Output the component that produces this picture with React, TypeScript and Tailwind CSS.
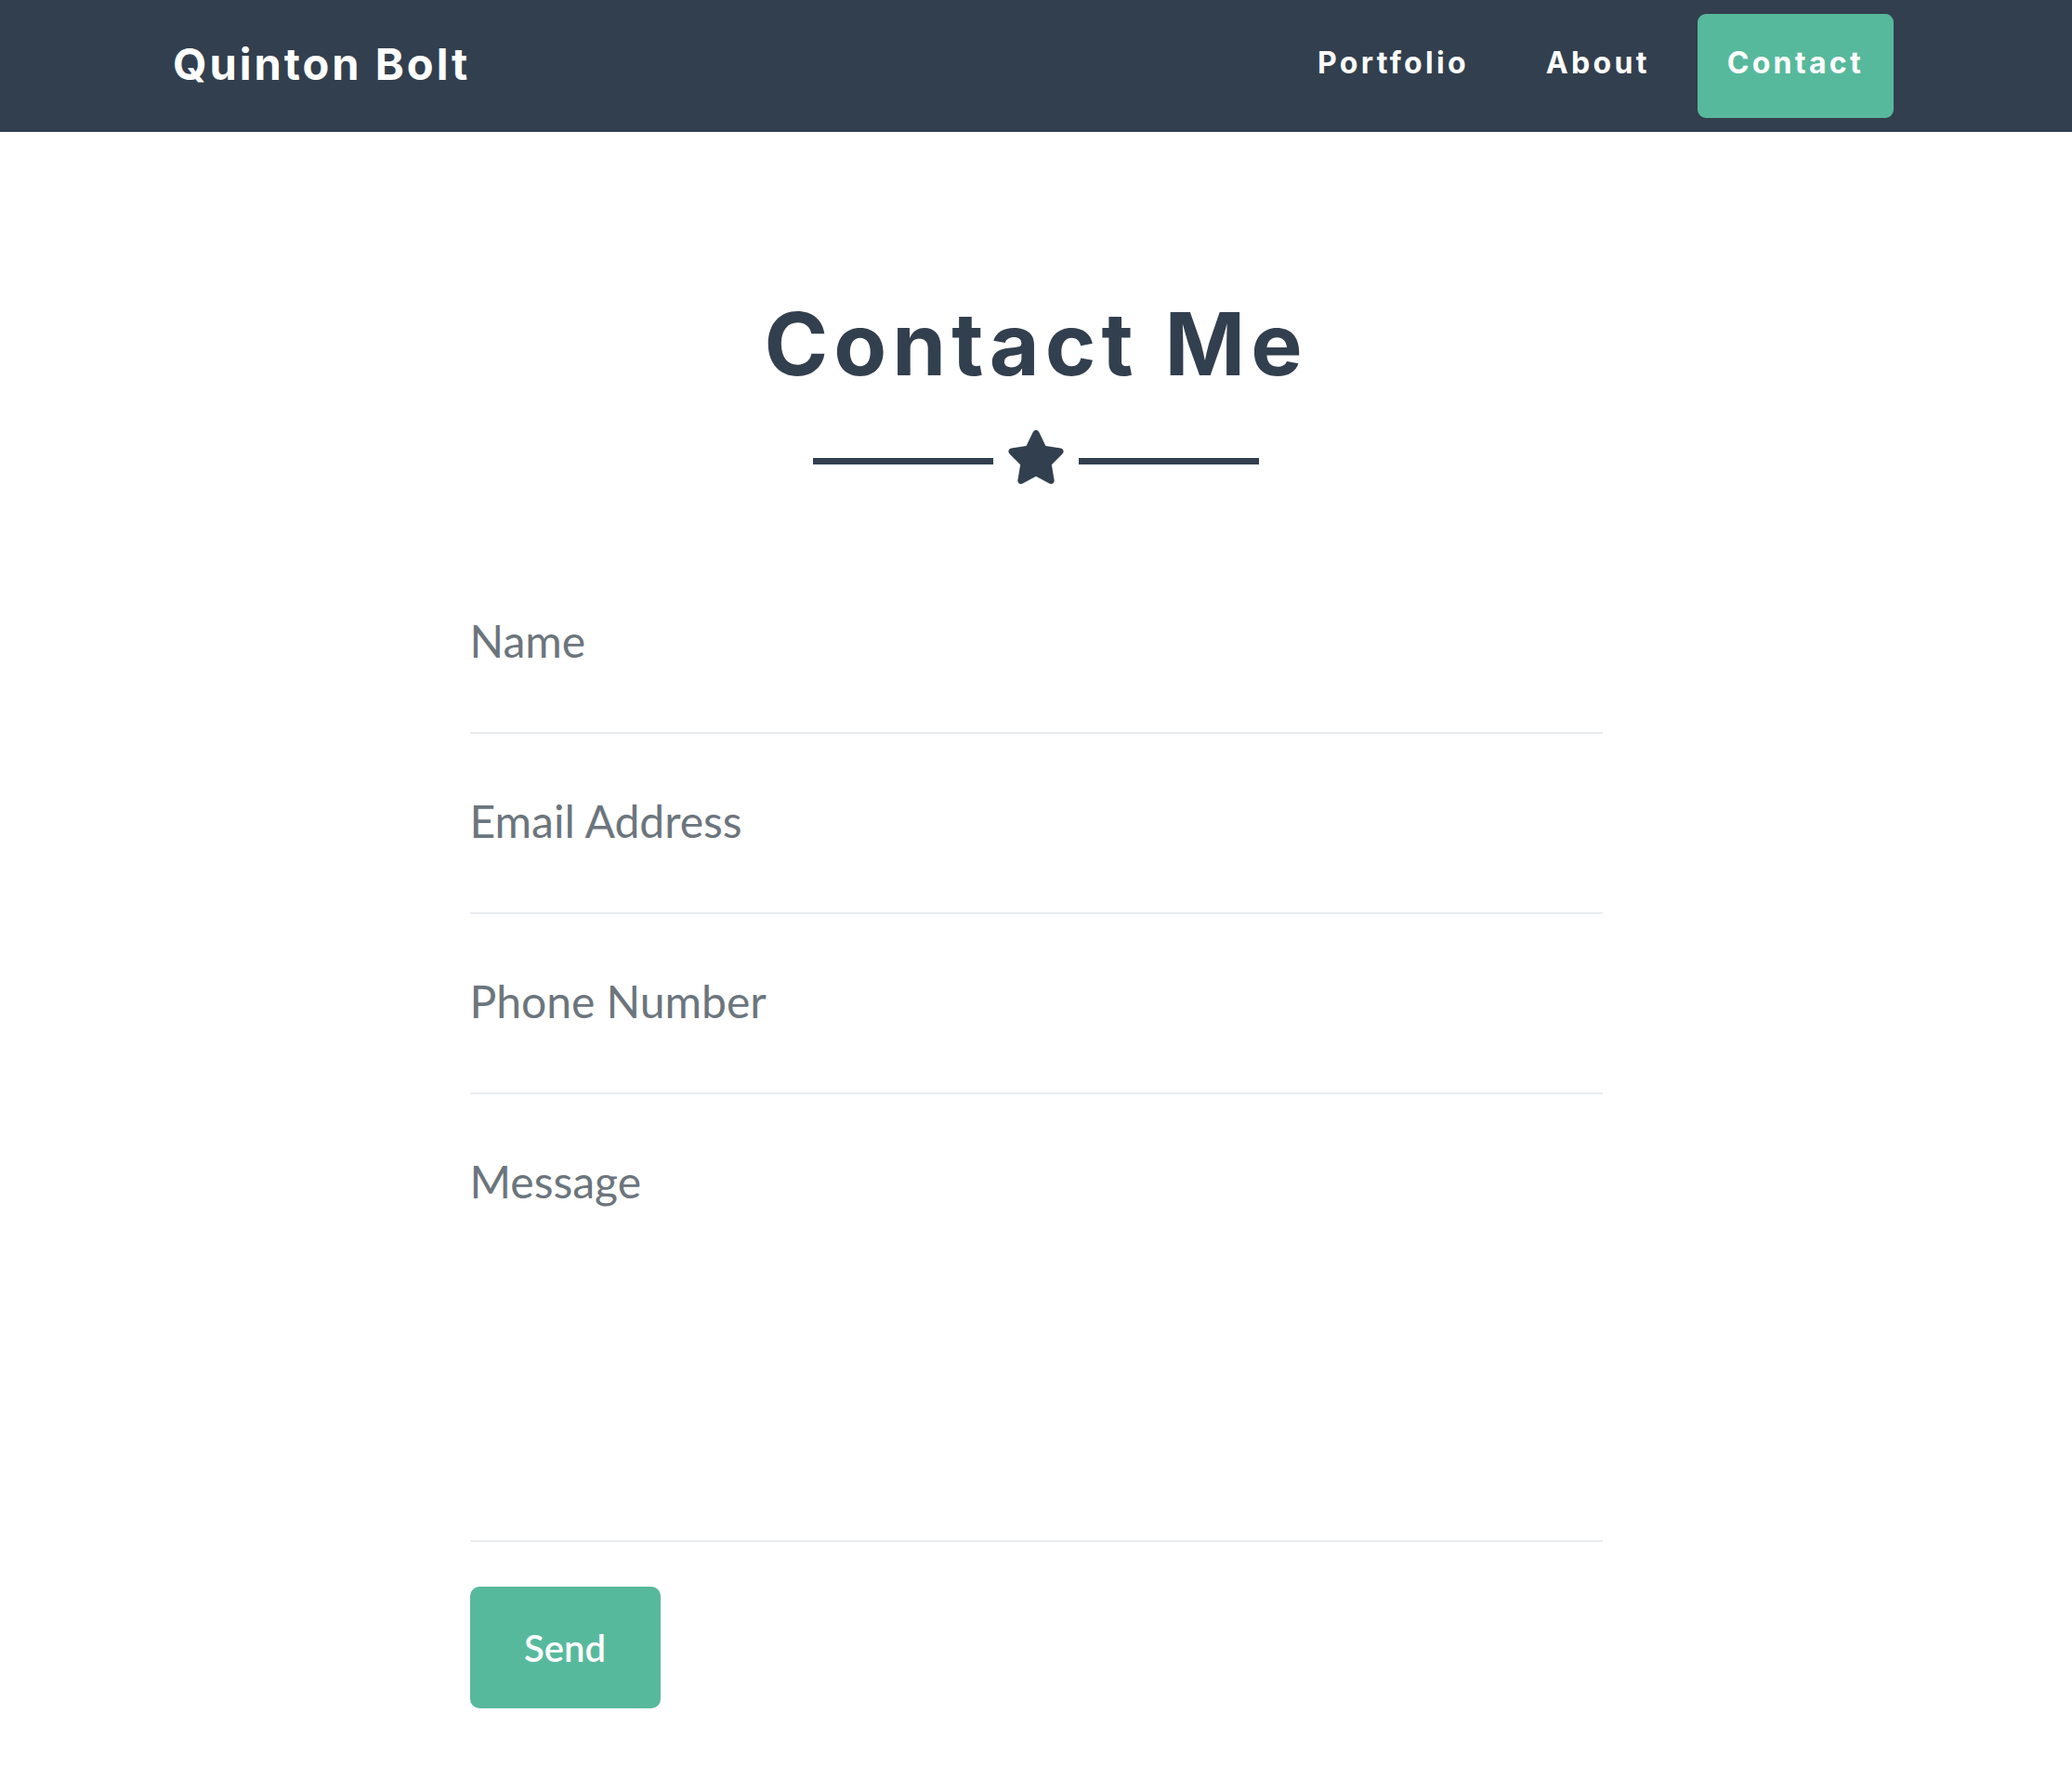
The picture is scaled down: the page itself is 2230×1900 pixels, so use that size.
import React from "react";

const heading = { fontFamily: "Inter, 'Open Sans', sans-serif" };
const body = { fontFamily: "Lato, 'Open Sans', sans-serif" };

const navLinks = [
  { label: "Portfolio", active: false },
  { label: "About", active: false },
  { label: "Contact", active: true },
];

const fields = [
  { label: "Name", tall: false },
  { label: "Email Address", tall: false },
  { label: "Phone Number", tall: false },
  { label: "Message", tall: true },
];

const Star = () => (
  <svg width="60" height="58" viewBox="17 0 542 512" preserveAspectRatio="none" className="fill-[#323f4e]">
    <path d="M259.3 17.8L194 150.2 47.9 171.5c-26.2 3.8-36.7 36.1-17.7 54.6l105.7 103-25 145.5c-4.5 26.3 23.2 46 46.4 33.7L288 439.6l130.7 68.7c23.2 12.2 50.9-7.4 46.4-33.7l-25-145.5 105.7-103c19-18.5 8.5-50.8-17.7-54.6L382 150.2 316.7 17.8c-11.7-23.6-45.6-23.9-57.4 0z" />
  </svg>
);

const App = () => {
  return (
    <div className="min-h-[1900px] bg-white">
      <nav className="h-[142px] bg-[#323f4e] flex items-center justify-between pl-[186px] pr-[192px]">
        <a className="text-white font-bold text-[47px] leading-none tracking-[3px] -mt-[5px]" style={heading}>
          Quinton Bolt
        </a>
        <ul className="flex items-center gap-[19px] -mt-[1px]">
          {navLinks.map((link) => (
            <li key={link.label}>
              <a
                className={`h-[112px] px-8 pb-[5px] rounded-[9px] flex items-center text-white font-bold text-[32px] tracking-[3.3px] ${
                  link.active ? "bg-[#57b99c]" : ""
                }`}
                style={heading}
              >
                {link.label}
              </a>
            </li>
          ))}
        </ul>
      </nav>

      <section className="flex flex-col items-center">
        <h2 className="mt-[182px] text-[93px] leading-none font-bold text-[#323f4e] tracking-[6px]" style={heading}>
          Contact Me
        </h2>
        <div className="mt-[46px] flex items-center gap-4">
          <div className="w-[194px] h-[7px] bg-[#323f4e] mt-[8px]" />
          <Star />
          <div className="w-[194px] h-[7px] bg-[#323f4e] mt-[8px]" />
        </div>

        <form className="mt-[75px] w-[1219px]" style={body}>
          {fields.map((f) => (
            <div
              key={f.label}
              className={`${f.tall ? "h-[482px]" : "h-[194px]"} border-b-2 border-[#e9ecef] pt-[70px]`}
            >
              <p className="text-[48px] leading-none text-[#6c757d]">{f.label}</p>
            </div>
          ))}
          <button
            type="button"
            className="mt-[48px] w-[205px] h-[131px] rounded-[10px] bg-[#57b99c] text-white text-[40px] font-semibold"
          >
            Send
          </button>
        </form>
      </section>
    </div>
  );
};

export default App;
